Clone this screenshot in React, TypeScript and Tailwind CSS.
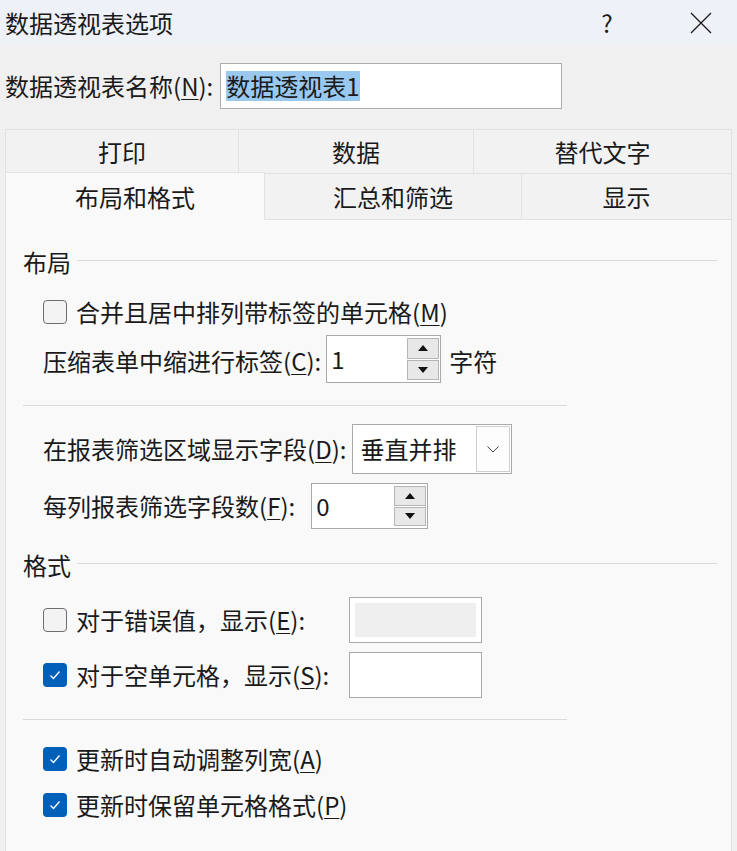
import React from 'react'

const font = { fontFamily: '"Noto Sans CJK SC", "Noto Sans", sans-serif' }

function Mn({ children }: { children: React.ReactNode }) {
  return <span className="underline underline-offset-[3px] decoration-1">{children}</span>
}

function CheckBox({ checked }: { checked?: boolean }) {
  if (checked) {
    return (
      <div className="w-[24px] h-[24px] rounded-[4px] bg-[#005fb8] flex items-center justify-center shrink-0">
        <svg width="14" height="14" viewBox="0 0 14 14">
          <path d="M2.5 7.5 L5.5 10.5 L11.5 3.5" fill="none" stroke="white" strokeWidth="1.3" />
        </svg>
      </div>
    )
  }
  return <div className="w-[24px] h-[24px] rounded-[4px] border border-[#6e6e6e] bg-[#f3f3f3] shrink-0" />
}

function SpinBox({ value, w, h }: { value: string; w: string; h: string }) {
  return (
    <div className={`${w} ${h} border border-[#a9a9a9] bg-white flex`}>
      <div className="flex-1 pl-[4px] flex items-center">{value}</div>
      <div className="w-[33px] flex flex-col py-[2px] pr-[1px] gap-[1px]">
        <div className="flex-1 border border-[#b5b5b5] bg-[#e8e8e8] flex items-center justify-center">
          <svg width="10" height="6" viewBox="0 0 10 6">
            <path d="M0 6 L5 0 L10 6 Z" fill="#111" />
          </svg>
        </div>
        <div className="flex-1 border border-[#b5b5b5] bg-[#e8e8e8] flex items-center justify-center">
          <svg width="10" height="6" viewBox="0 0 10 6">
            <path d="M0 0 L5 6 L10 0 Z" fill="#111" />
          </svg>
        </div>
      </div>
    </div>
  )
}

function SectionHead({ label }: { label: string }) {
  return (
    <div className="h-[32px] flex items-center">
      <span>{label}</span>
      <div className="flex-1 h-px bg-[#dadada] ml-[6px] -mt-[4px]" />
    </div>
  )
}

export default function App() {
  return (
    <div className="w-[737px] h-[851px] overflow-hidden bg-[#f0f0f0] text-[24px] text-[#1a1a1a] leading-none" style={font}>
      {/* title bar */}
      <div className="h-[45px] bg-[#eef2f8] flex items-center pl-[5px]">
        <span className="flex-1">数据透视表选项</span>
        <span className="w-[20px] text-center mr-[72px]">?</span>
        <svg width="24" height="24" viewBox="0 0 24 24" className="mr-[24px]">
          <path d="M2 2 L22 22 M22 2 L2 22" stroke="#1a1a1a" strokeWidth="1.3" />
        </svg>
      </div>

      {/* name */}
      <div className="flex items-center mt-[18px] pl-[5px]">
        <span>数据透视表名称(<Mn>N</Mn>):</span>
        <div className="ml-[7px] w-[342px] h-[46px] border border-[#adadad] bg-white flex items-center pl-[5px]">
          <span className="bg-[#99c9ef] py-[3px]">数据透视表1</span>
        </div>
      </div>

      {/* tabs */}
      <div className="mt-[20px] ml-[5px] mr-[5px]">
        <div className="flex h-[45px]">
          <div className="w-[234px] border border-[#e2e2e2] bg-[#f2f2f2] flex items-center justify-center">打印</div>
          <div className="w-[235px] border border-l-0 border-[#e2e2e2] bg-[#f2f2f2] flex items-center justify-center">数据</div>
          <div className="flex-1 border border-l-0 border-[#e2e2e2] bg-[#f2f2f2] flex items-center justify-center">替代文字</div>
        </div>
        <div className="flex h-[47px] -mt-[1px]">
          <div className="w-[260px] border border-b-0 border-[#e2e2e2] bg-[#f9f9f9] flex items-center justify-center -mt-[1px] h-[48px] z-10">布局和格式</div>
          <div className="w-[257px] border border-l-0 border-[#e2e2e2] bg-[#f2f2f2] flex items-center justify-center">汇总和筛选</div>
          <div className="flex-1 border border-l-0 border-[#e2e2e2] bg-[#f2f2f2] flex items-center justify-center">显示</div>
        </div>

        {/* panel */}
        <div className="h-[700px] -mt-[1px] border border-[#e2e2e2] bg-[#f9f9f9] pl-[17px] pr-[14px] pt-[26px]">
          <SectionHead label="布局" />

          <div className="mt-[14px] h-[40px] flex items-center pl-[20px] gap-[9px]">
            <CheckBox />
            <span>合并且居中排列带标签的单元格(<Mn>M</Mn>)</span>
          </div>

          <div className="mt-[3px] flex items-center pl-[20px]">
            <span className="pt-[3px]">压缩表单中缩进行标签(<Mn>C</Mn>):</span>
            <div className="ml-[5px]">
              <SpinBox value="1" w="w-[115px]" h="h-[48px]" />
            </div>
            <span className="ml-[8px] pt-[3px]">字符</span>
          </div>

          <div className="mt-[22px] w-[544px] h-px bg-[#dadada]" />

          <div className="mt-[18px] flex items-center pl-[20px]">
            <span>在报表筛选区域显示字段(<Mn>D</Mn>):</span>
            <div className="ml-[6px] w-[160px] h-[50px] border border-[#a9a9a9] bg-white flex items-center pl-[7px] pr-[1px]">
              <span className="flex-1">垂直并排</span>
              <div className="w-[34px] h-[46px] border border-[#cfcfcf] bg-[#fdfdfd] flex items-center justify-center">
                <svg width="12" height="7" viewBox="0 0 12 7">
                  <path d="M0.5 0.5 L6 6 L11.5 0.5" fill="none" stroke="#444" strokeWidth="1" />
                </svg>
              </div>
            </div>
          </div>

          <div className="mt-[9px] flex items-center pl-[20px]">
            <span>每列报表筛选字段数(<Mn>F</Mn>):</span>
            <div className="ml-[16px]">
              <SpinBox value="0" w="w-[117px]" h="h-[46px]" />
            </div>
          </div>

          <div className="mt-[20px]">
            <SectionHead label="格式" />
          </div>

          <div className="mt-[16px] flex items-center pl-[20px]">
            <div className="w-[306px] flex items-center gap-[9px]">
              <CheckBox />
              <span>对于错误值，显示(<Mn>E</Mn>):</span>
            </div>
            <div className="w-[133px] h-[46px] border border-[#a9a9a9] bg-white p-[5px]">
              <div className="w-full h-full bg-[#efefef]" />
            </div>
          </div>

          <div className="mt-[9px] flex items-center pl-[20px]">
            <div className="w-[306px] flex items-center gap-[9px]">
              <CheckBox checked />
              <span>对于空单元格，显示(<Mn>S</Mn>):</span>
            </div>
            <div className="w-[133px] h-[46px] border border-[#a9a9a9] bg-white" />
          </div>

          <div className="mt-[21px] w-[544px] h-px bg-[#dadada]" />

          <div className="mt-[19px] h-[40px] flex items-center pl-[20px] gap-[9px]">
            <CheckBox checked />
            <span>更新时自动调整列宽(<Mn>A</Mn>)</span>
          </div>

          <div className="mt-[6px] h-[40px] flex items-center pl-[20px] gap-[9px]">
            <CheckBox checked />
            <span>更新时保留单元格格式(<Mn>P</Mn>)</span>
          </div>
        </div>
      </div>
    </div>
  )
}
